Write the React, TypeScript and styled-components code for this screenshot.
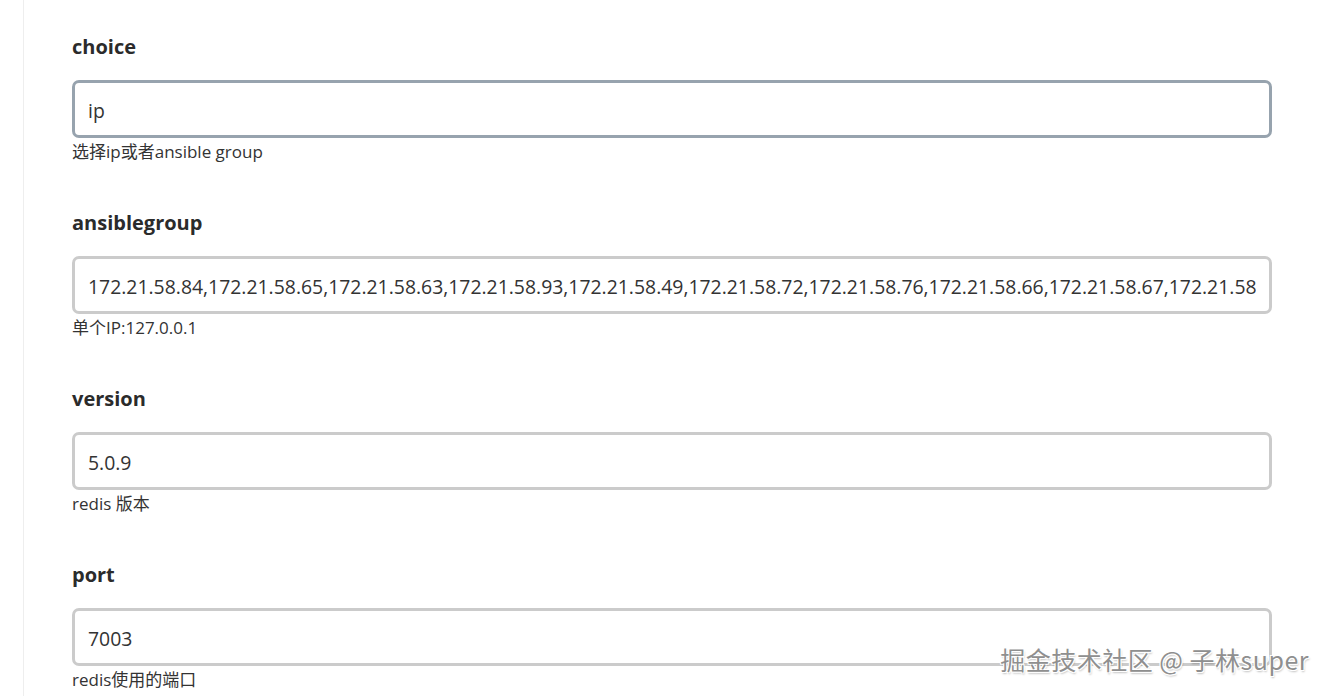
import React from "react";
import styled, { createGlobalStyle } from "styled-components";

const Global = createGlobalStyle`
  html, body { margin: 0; padding: 0; background: #fff; }
  body { font-family: "Open Sans", "Noto Sans", "Noto Sans CJK SC", sans-serif; color: #333; }
`;

const Page = styled.div`
  height: 696px;
  overflow: hidden;
  padding-left: 23px;
  position: relative;
`;

const Panel = styled.div`
  border-left: 1px solid #eeeeee;
  padding: 32px 0 0 48px;
  min-height: 696px;
  box-sizing: border-box;
  width: 1249px;
`;

const Field = styled.div`
  display: flex;
  flex-direction: column;
  margin-bottom: 44px;
`;

const Label = styled.label`
  font-size: 20px;
  font-weight: 700;
  line-height: 30px;
  color: #2b2b2b;
  margin-bottom: 18px;
`;

const Input = styled.input<{ $focused?: boolean }>`
  box-sizing: border-box;
  width: 1200px;
  height: 58px;
  border: 3px solid ${(p) => (p.$focused ? "#97a3ae" : "#cbcbcb")};
  border-radius: 7px;
  padding: 3px 13px 0;
  font-family: "Open Sans", "Noto Sans", sans-serif;
  font-size: 19.4px;
  color: #333;
  background: #fff;
  outline: none;
`;

const Help = styled.div`
  margin-top: 2px;
  font-size: 17px;
  line-height: 24px;
  color: #333;
  font-family: "Open Sans", "Noto Sans CJK SC", sans-serif;
`;

const Watermark = styled.div`
  position: absolute;
  right: 20px;
  bottom: 21px;
  font-family: "Noto Sans CJK SC", "Noto Sans", sans-serif;
  font-size: 25px;
  line-height: 32px;
  color: #8f8f8f;
  text-shadow: 1px 1px 0 #fff, -1px -1px 0 #fff, 1px -1px 0 #fff, -1px 1px 0 #fff, 1px 2px 2px rgba(0,0,0,0.25);
  letter-spacing: 0.5px;
`;

const ips = [84, 65, 63, 93, 49, 72, 76, 66, 67, 68, 69, 70].map((n) => `172.21.58.${n}`).join(",");

const fields = [
  { label: "choice", value: "ip", help: "选择ip或者ansible group", focused: true },
  { label: "ansiblegroup", value: ips, help: "单个IP:127.0.0.1" },
  { label: "version", value: "5.0.9", help: "redis 版本" },
  { label: "port", value: "7003", help: "redis使用的端口" },
];

export default function App() {
  return (
    <>
      <Global />
      <Page>
        <Panel>
          {fields.map((f) => (
            <Field key={f.label}>
              <Label>{f.label}</Label>
              <Input $focused={f.focused} value={f.value} readOnly />
              <Help>{f.help}</Help>
            </Field>
          ))}
        </Panel>
        <Watermark>掘金技术社区 @ 子林super</Watermark>
      </Page>
    </>
  );
}
